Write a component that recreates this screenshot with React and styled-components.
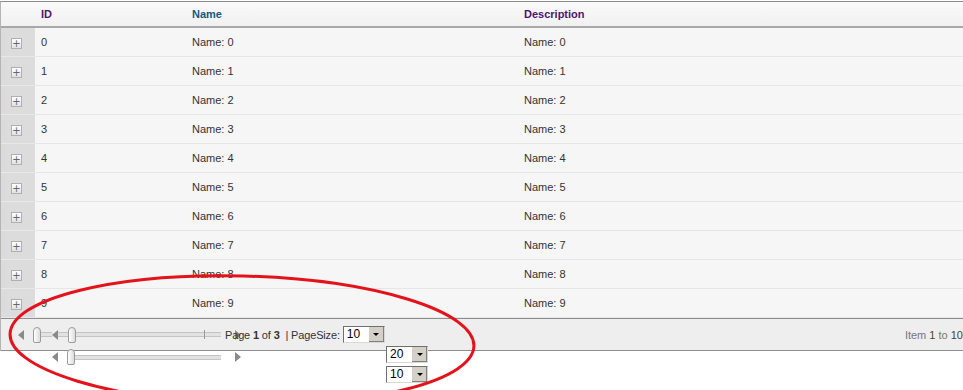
import styled, { createGlobalStyle } from "styled-components";

const GlobalStyle = createGlobalStyle`
  html, body {
    margin: 0;
    padding: 0;
    background: #fff;
    font-family: "Liberation Sans", Arial, sans-serif;
    font-size: 11px;
    color: #333;
    overflow: hidden;
  }
`;

const Page = styled.div`
  position: relative;
  width: 963px;
  height: 390px;
  padding-top: 1px;
  box-sizing: border-box;
`;

const Grid = styled.div`
  border-top: 1px solid #8c8c8c;
  border-left: 1px solid #b5b5b5;
`;

const Row = styled.div`
  display: grid;
  grid-template-columns: 34px 151px 332px 1fr;
  height: 29px;
  align-items: center;
`;

const HeaderRow = styled(Row)`
  height: 24px;
  background: linear-gradient(#fafafa, #f1f1f1);
  border-bottom: 2px solid #a8a8a8;
`;

const HeadCell = styled.div`
  padding-left: 6px;
  font-weight: bold;
  font-size: 11px;
  color: ${(p) => p.color};
`;

const DataRow = styled(Row)`
  background: #f6f6f6;
  border-bottom: 1px solid #e6e6e6;
  box-sizing: border-box;
`;

const ExpandCell = styled.div`
  align-self: stretch;
  background: #dcdcdc;
  border-bottom: 1px solid #e8e8e8;
  margin-bottom: -1px;
  display: flex;
  align-items: center;
  padding-left: 10px;
  padding-top: 2px;
`;

const PlusBox = styled.div`
  width: 9px;
  height: 9px;
  border: 1px solid #b0b0b0;
  background: linear-gradient(#ffffff, #e2e2e2);
  color: #666;
  font-size: 10px;
  line-height: 9px;
  text-align: center;
  font-family: "DejaVu Sans", sans-serif;
`;

const Cell = styled.div`
  padding-left: 6px;
  font-size: 11px;
  color: #333;
`;

const Footer = styled.div`
  display: flex;
  align-items: center;
  height: 31px;
  background: #eeeeee;
  border-top: 1px solid #8e8e8e;
  border-bottom: 1px solid #8e8e8e;
  padding-left: 17px;
  font-size: 11px;
  color: #333;
`;

const Slider = styled.div`
  display: flex;
  align-items: center;
  width: ${(p) => p.w}px;
  height: 16px;
  margin-left: ${(p) => p.ml || 0}px;
  flex-shrink: 0;
`;

const Track = styled.div`
  flex: ${(p) => (p.len ? `0 0 ${p.len}px` : "1")};
  height: 3px;
  border-top: 1px solid #c4c4c4;
  border-bottom: 1px solid #c4c4c4;
  background: #e2e2e2;
`;

const Handle = styled.div`
  width: 6px;
  height: 14px;
  border: 1px solid #9a9a9a;
  border-radius: 4px 4px 2px 2px;
  background: linear-gradient(90deg, #ffffff, #dcdcdc);
  flex-shrink: 0;
`;

const Arrow = styled.div`
  width: 0;
  height: 0;
  border-top: 5px solid transparent;
  border-bottom: 5px solid transparent;
  ${(p) =>
    p.dir === "left"
      ? "border-right: 6px solid #8a8a8a;"
      : "border-left: 6px solid #8a8a8a;"}
  flex-shrink: 0;
  margin-left: ${(p) => p.ml || 0}px;
  margin-right: ${(p) => p.mr || 0}px;
`;

const Tick = styled.div`
  width: 1px;
  height: 9px;
  background: #999;
  flex-shrink: 0;
`;

const PagerText = styled.span`
  margin-left: 4px;
  white-space: nowrap;
  letter-spacing: -0.15px;
  b {
    font-weight: bold;
  }
`;

const Select = styled.div`
  display: flex;
  width: 42px;
  height: 17px;
  box-sizing: border-box;
  border: 1px solid #6f6f6f;
  border-right-color: #d8d8d8;
  border-bottom-color: #d8d8d8;
  background: #fff;
  margin-left: ${(p) => p.ml || 0}px;
`;

const SelectValue = styled.div`
  flex: 1;
  font-size: 12px;
  line-height: 15px;
  padding-left: 3px;
  color: #000;
`;

const SelectButton = styled.div`
  width: 15px;
  background: #d4d0c8;
  border-left: 1px solid #fff;
  box-shadow: inset -1px -1px 0 #808080;
  display: flex;
  align-items: center;
  justify-content: center;
  &::after {
    content: "";
    border-left: 3px solid transparent;
    border-right: 3px solid transparent;
    border-top: 3px solid #000;
  }
`;

const ItemInfo = styled.div`
  margin-left: auto;
  color: #777;
  font-size: 11px;
  white-space: nowrap;
  span {
    color: #444;
  }
`;

const Spill = styled.div`
  display: flex;
  align-items: flex-start;
  padding-left: 52px;
`;

const SpillSlider = styled.div`
  display: flex;
  align-items: center;
  height: 12px;
`;

const SpillSelects = styled.div`
  display: flex;
  flex-direction: column;
  gap: 3px;
  margin-left: 145px;
  margin-top: -5px;
`;

const Mark = styled.svg`
  position: absolute;
  left: 0;
  top: 0;
  pointer-events: none;
`;

function SelectBox({ value, ml }) {
  return (
    <Select ml={ml}>
      <SelectValue>{value}</SelectValue>
      <SelectButton />
    </Select>
  );
}

const rows = Array.from({ length: 10 }, (_, i) => i);

export default function App() {
  return (
    <Page>
      <GlobalStyle />
      <Grid>
        <HeaderRow>
          <div />
          <HeadCell color="#4b1570">ID</HeadCell>
          <HeadCell color="#17587e">Name</HeadCell>
          <HeadCell color="#4b1570">Description</HeadCell>
        </HeaderRow>
        {rows.map((i) => (
          <DataRow key={i}>
            <ExpandCell>
              <PlusBox>+</PlusBox>
            </ExpandCell>
            <Cell>{i}</Cell>
            <Cell>Name: {i}</Cell>
            <Cell>Name: {i}</Cell>
          </DataRow>
        ))}
        <Footer>
          <Arrow dir="left" />
          <Slider w={188} ml={9}>
            <Handle />
            <Track len={11} />
            <Arrow dir="left" />
            <Track len={10} />
            <Handle />
            <Track len={128} />
            <Tick />
            <Track />
          </Slider>
          <Arrow dir="right" ml={14} mr={-20} />
          <PagerText>
            Page <b>1</b> of <b>3</b> &nbsp;| PageSize:
          </PagerText>
          <SelectBox value="10" ml={3} />
          <ItemInfo>
            Item <span>1</span> to <span>10</span>
          </ItemInfo>
        </Footer>
      </Grid>
      <Spill>
        <SpillSlider>
          <Arrow dir="left" />
          <Slider w={154} ml={9}>
            <Handle />
            <Track />
          </Slider>
          <Arrow dir="right" ml={14} />
        </SpillSlider>
        <SpillSelects>
          <SelectBox value="20" />
          <SelectBox value="10" />
        </SpillSelects>
      </Spill>
      <Mark width="963" height="390">
        <ellipse
          cx="242"
          cy="340"
          rx="232"
          ry="64"
          transform="rotate(1.5 242 340)"
          fill="none"
          stroke="#e4121b"
          strokeWidth="3"
        />
      </Mark>
    </Page>
  );
}
